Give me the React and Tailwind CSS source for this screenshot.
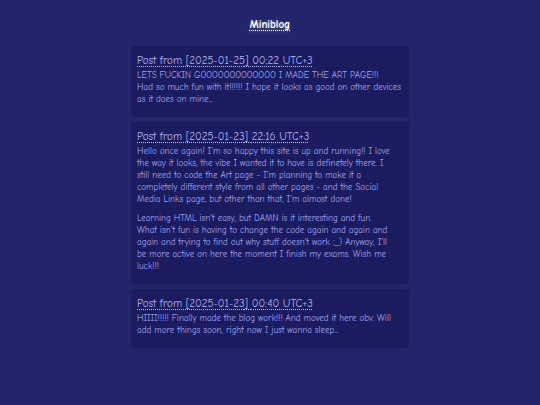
const posts = [
  {
    date: "2025-01-25",
    time: "00:22",
    paragraphs: [
      [
        "LETS FUCKIN GOOOOOOOOOOOOO I MADE THE ART PAGE!!!",
        "Had so much fun with it!!!!!! I hope it looks as good on other devices",
        "as it does on mine...",
      ],
    ],
  },
  {
    date: "2025-01-23",
    time: "22:16",
    paragraphs: [
      [
        "Hello once again! I'm so happy this site is up and running!! I love",
        "the way it looks, the vibe I wanted it to have is definetely there. I",
        "still need to code the Art page - I'm planning to make it a",
        "completely different style from all other pages - and the Social",
        "Media Links page, but other than that, I'm almost done!",
      ],
      [
        "Learning HTML isn't easy, but DAMN is it interesting and fun.",
        "What isn't fun is having to change the code again and again and",
        "again and trying to find out why stuff doesn't work :_) Anyway, I'll",
        "be more active on here the moment I finish my exams. Wish me",
        "luck!!!",
      ],
    ],
  },
  {
    date: "2025-01-23",
    time: "00:40",
    paragraphs: [
      [
        "HIIII!!!!! Finally made the blog work!!! And moved it here obv. Will",
        "add more things soon, right now I just wanna sleep...",
      ],
    ],
  },
];

function Post({ post }) {
  return (
    <div className="bg-[#1b1c60] rounded-[4px] px-[6px] pt-[8px] pb-[12px]">
      <h2 className="text-[11px] leading-[14px] text-[#b4b4ec] underline decoration-dotted underline-offset-2 whitespace-nowrap">
        Post from [{post.date}] {post.time} UTC+3
      </h2>
      <div className="flex flex-col gap-[7px] mt-[1px]">
        {post.paragraphs.map((lines, i) => (
          <p key={i} className="text-[9px] leading-[12px] text-[#a2a2ee] whitespace-nowrap">
            {lines.map((l, j) => (
              <span key={j} className="block">{l}</span>
            ))}
          </p>
        ))}
      </div>
    </div>
  );
}

export default function App() {
  return (
    <div
      className="w-[540px] h-[405px] bg-[#23256a] flex flex-col items-center pt-[17px]"
      style={{ fontFamily: '"Comic Sans MS", "Comic Neue", "DejaVu Sans", sans-serif' }}
    >
      <h1 className="text-[11px] leading-[16px] font-bold text-white underline decoration-dotted underline-offset-2 [text-shadow:0_0_2px_rgba(255,255,255,0.5)]">
        Miniblog
      </h1>
      <div className="w-[278px] flex flex-col gap-[5px] mt-[13px]">
        {posts.map((p, i) => (
          <Post key={i} post={p} />
        ))}
      </div>
    </div>
  );
}
